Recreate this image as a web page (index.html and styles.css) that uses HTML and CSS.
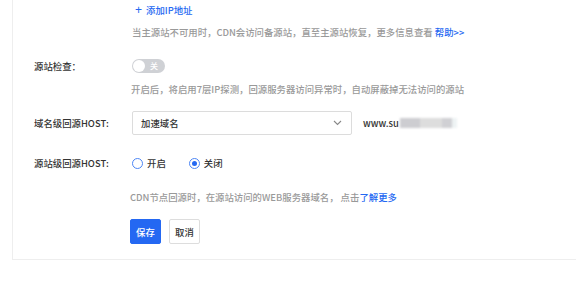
FILE: index.html
```html
<!DOCTYPE html>
<html lang="zh">
<head>
<meta charset="utf-8">
<link rel="stylesheet" href="styles.css">
</head>
<body>
<div class="card">
  <div class="row">
    <div class="label"></div>
    <div class="control">
      <div class="add-link"><span class="plus">+</span>添加IP地址</div>
      <div class="hint first-hint">当主源站不可用时，CDN会访问备源站，直至主源站恢复，更多信息查看 <span class="link">帮助&gt;&gt;</span></div>
    </div>
  </div>

  <div class="row row-check">
    <div class="label label-switch">源站检查：</div>
    <div class="control">
      <div class="switch"><span class="knob"></span><span class="switch-text">关</span></div>
      <div class="hint desc">开启后，将启用7层IP探测，回源服务器访问异常时，自动屏蔽掉无法访问的源站</div>
    </div>
  </div>

  <div class="row row-host">
    <div class="label label-select">域名级回源HOST:</div>
    <div class="control control-inline">
      <div class="select">
        <span>加速域名</span>
        <svg class="chev" width="9" height="6" viewBox="0 0 9 6"><path d="M1 1 L4.5 4.5 L8 1" fill="none" stroke="#888" stroke-width="1.1"/></svg>
      </div>
      <div class="domain">www.su<span class="blur"><i class="b1"></i><i class="b2"></i><i class="b3"></i><i class="b4"></i></span></div>
    </div>
  </div>

  <div class="row row-radio">
    <div class="label label-radio">源站级回源HOST:</div>
    <div class="control">
      <div class="radios">
        <label class="radio"><span class="dot"></span>开启</label>
        <label class="radio checked"><span class="dot"></span>关闭</label>
      </div>
      <div class="hint hint-host">CDN节点回源时，在源站访问的WEB服务器域名， 点击<span class="link">了解更多</span></div>
      <div class="buttons">
        <button class="btn btn-primary">保存</button>
        <button class="btn">取消</button>
      </div>
    </div>
  </div>
</div>
</body>
</html>
```

FILE: styles.css
```css
html, body {
  margin: 0;
  padding: 0;
  background: #fff;
}
body {
  font-family: "Noto Sans CJK SC", "Liberation Sans", sans-serif;
  font-size: 9.4px;
  font-weight: 500;
  color: #333;
  width: 576px;
  height: 282px;
  overflow: hidden;
}
.card {
  margin-left: 12px;
  border-left: 1px solid #eeeeee;
  border-bottom: 1px solid #eeeeee;
  padding: 0 0 15px 21px;
}
.row {
  display: flex;
  align-items: flex-start;
}
.label {
  width: 98px;
  flex: none;
  color: #333;
}
.control {
  flex: 1;
  min-width: 0;
}
.add-link {
  height: 20px;
  line-height: 20px;
  color: #2468f2;
  padding-left: 3px;
  display: flex;
  align-items: center;
}
.plus {
  font-size: 12px;
  font-weight: 400;
  font-family: "Liberation Sans", sans-serif;
  margin-right: 4px;
}
.hint {
  color: #999;
  line-height: 14px;
  height: 14px;
  white-space: nowrap;
}
.first-hint {
  margin-top: 5px;
}
.link {
  color: #2468f2;
}
.row-check {
  margin-top: 20px;
}
.label-switch {
  line-height: 14px;
}
.switch {
  width: 33px;
  height: 14px;
  border-radius: 7px;
  background: #cfd1d5;
  display: flex;
  align-items: center;
}
.knob {
  width: 12px;
  height: 12px;
  border-radius: 50%;
  background: #fff;
  margin-left: 1px;
}
.switch-text {
  color: #fff;
  font-size: 8px;
  margin-left: 5px;
  line-height: 14px;
}
.desc {
  margin-top: 9px;
  margin-left: -1px;
}
.row-host {
  margin-top: 15px;
}
.label-select {
  line-height: 24px;
}
.control-inline {
  display: flex;
  align-items: center;
}
.select {
  width: 201px;
  height: 22px;
  border: 1px solid #dcdcdc;
  border-radius: 2px;
  display: flex;
  align-items: center;
  justify-content: space-between;
  padding: 0 9px 0 8px;
}
.select span {
  color: #333;
}
.domain {
  margin-left: 11px;
  color: #333;
  display: flex;
  align-items: center;
}
.blur {
  display: inline-flex;
  margin-left: 1px;
  filter: blur(1px);
}
.blur i {
  display: block;
  height: 10px;
}
.b1 { width: 20px; background: #cdcdd1; }
.b2 { width: 22px; background: #dddddd; }
.b3 { width: 10px; background: #d0d0d4; }
.b4 { width: 5px; background: #eef3f4; }
.row-radio {
  margin-top: 20px;
}
.label-radio {
  line-height: 16px;
}
.radios {
  display: flex;
  height: 16px;
  align-items: center;
}
.radio {
  display: flex;
  align-items: center;
  margin-right: 23px;
  color: #333;
}
.dot {
  width: 11px;
  height: 11px;
  box-sizing: border-box;
  border: 1px solid #4d86f5;
  border-radius: 50%;
  margin-right: 4px;
  display: flex;
  align-items: center;
  justify-content: center;
}
.checked .dot::after {
  content: "";
  width: 5px;
  height: 5px;
  border-radius: 50%;
  background: #2468f2;
}
.hint-host {
  margin-top: 19px;
  margin-left: -2px;
}
.buttons {
  margin-top: 15px;
  display: flex;
  gap: 8px;
  margin-left: -2px;
}
.btn {
  width: 31px;
  height: 25px;
  padding: 0;
  border: 1px solid #dddddd;
  border-radius: 2px;
  background: #fff;
  color: #333;
  font-family: "Noto Sans CJK SC", "Liberation Sans", sans-serif;
  font-size: 9.4px;
  font-weight: 500;
}
.btn-primary {
  background: #2468f2;
  border-color: #2468f2;
  color: #fff;
}
```
